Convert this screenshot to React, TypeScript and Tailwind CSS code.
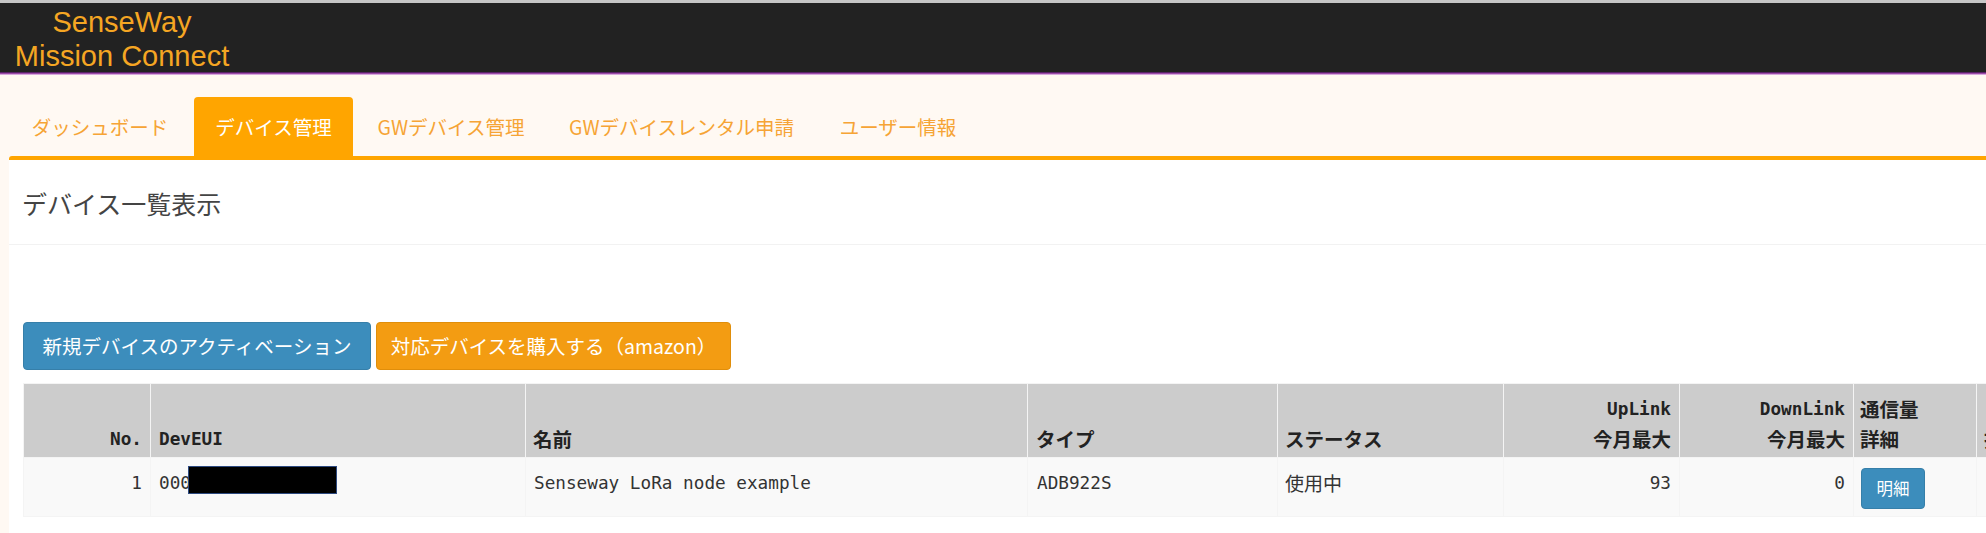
import React from "react";

const tabs = [
  { label: "ダッシュボード", w: "w-[178px]", active: false },
  { label: "デバイス管理", w: "w-[159px]", active: true },
  { label: "GWデバイス管理", w: "w-[186px]", active: false },
  { label: "GWデバイスレンタル申請", w: "w-[265px]", active: false },
  { label: "ユーザー情報", w: "w-[158px]", active: false },
];

const mono = "font-['DejaVu_Sans_Mono','Noto_Sans_CJK_JP',monospace]";
const jp = "font-['Noto_Sans_CJK_JP',sans-serif]";

export default function App() {
  return (
    <div className={`w-[1986px] h-[533px] overflow-hidden bg-[#fff9f3] ${jp}`}>
      <div className="h-[3px] bg-[#c6c6c6]" />
      <header className="h-[69px] bg-[#222222] pt-[2px]">
        <div className="w-[244px] text-center font-['Liberation_Sans',Arial,sans-serif] text-[29px] leading-[34px] text-[#f5a623]">
          <div>SenseWay</div>
          <div>Mission Connect</div>
        </div>
      </header>
      <div className="h-[1px] bg-[#5a2468]" />
      <div className="h-[1px] bg-[#9b4aa9]" />
      <div className="h-[1px] bg-[#d6a8dc]" />

      <nav className="h-[81px] flex items-end gap-[5px] pl-[11px]">
        {tabs.map((t) => (
          <div
            key={t.label}
            className={`${t.w} h-[59px] flex items-center justify-center text-[19.5px] rounded-t-[4px] ${
              t.active ? "bg-[#ffa500] text-white" : "text-[#f6a435]"
            }`}
          >
            {t.label}
          </div>
        ))}
      </nav>

      <main className="ml-[9px] bg-white border-t-[4px] border-[#ffa500] rounded-tl-[3px] h-[400px]">
        <div className="h-[85px] pt-[25px] pl-[13px] border-b border-[#f2f2f2]">
          <h3 className="text-[25px] leading-[36px] text-[#444444] font-normal">デバイス一覧表示</h3>
        </div>

        <div className="pl-[14px] pt-[77px] flex gap-[5px]">
          <button className="w-[348px] h-[48px] rounded-[4px] bg-[#3c8dbc] border border-[#367fa9] text-white text-[19.5px] flex items-center justify-center">
            新規デバイスのアクティベーション
          </button>
          <button className="w-[355px] h-[48px] rounded-[4px] bg-[#f39c12] border border-[#e08e0b] text-white text-[19.5px] flex items-center justify-center">
            対応デバイスを購入する（amazon）
          </button>
        </div>

        <div className="pl-[14px] pt-[13px]">
          <table className="table-fixed border-collapse w-[2100px] text-[#222]">
            <colgroup>
              <col className="w-[127px]" />
              <col className="w-[375px]" />
              <col className="w-[502px]" />
              <col className="w-[250px]" />
              <col className="w-[226px]" />
              <col className="w-[176px]" />
              <col className="w-[174px]" />
              <col className="w-[123px]" />
              <col className="w-[147px]" />
            </colgroup>
            <thead>
              <tr className="bg-[#cccccc] h-[74px]">
                <th className={`border border-[#f4f4f4] align-bottom text-right pr-[8px] pb-[3px] ${mono} text-[17.7px] leading-[30px] font-bold`}>No.</th>
                <th className={`border border-[#f4f4f4] align-bottom text-left pl-[8px] pb-[3px] ${mono} text-[17.7px] leading-[30px] font-bold`}>DevEUI</th>
                <th className={`border border-[#f4f4f4] align-bottom text-left pl-[7px] pb-[3px] ${jp} text-[19.5px] leading-[30px] font-bold`}>名前</th>
                <th className={`border border-[#f4f4f4] align-bottom text-left pl-[8px] pb-[3px] ${jp} text-[19.5px] leading-[30px] font-bold`}>タイプ</th>
                <th className={`border border-[#f4f4f4] align-bottom text-left pl-[7px] pb-[3px] ${jp} text-[19.5px] leading-[30px] font-bold`}>ステータス</th>
                <th className="border border-[#f4f4f4] align-bottom text-right pr-[8px] pb-[3px] leading-[30px] font-bold">
                  <div className={`${mono} text-[17.7px]`}>UpLink</div>
                  <div className={`${jp} text-[19.5px]`}>今月最大</div>
                </th>
                <th className="border border-[#f4f4f4] align-bottom text-right pr-[8px] pb-[3px] leading-[30px] font-bold">
                  <div className={`${mono} text-[17.7px]`}>DownLink</div>
                  <div className={`${jp} text-[19.5px]`}>今月最大</div>
                </th>
                <th className={`border border-[#f4f4f4] align-bottom text-left pl-[6px] pb-[3px] ${jp} text-[19.5px] leading-[30px] font-bold`}>
                  <div>通信量</div>
                  <div>詳細</div>
                </th>
                <th className={`border border-[#f4f4f4] align-bottom text-left pl-[7px] pb-[3px] ${jp} text-[19.5px] leading-[30px] font-bold`}>操作</th>
              </tr>
            </thead>
            <tbody>
              <tr className="bg-[#f9f9f9] h-[59px] text-[#333]">
                <td className={`border border-[#f4f4f4] align-top text-right pr-[8px] pt-[10px] ${mono} text-[17.7px] leading-[30px]`}>1</td>
                <td className={`border border-[#f4f4f4] align-top text-left pl-[8px] pt-[10px] ${mono} text-[17.7px] leading-[30px]`}>
                  <span className="relative inline-block">
                    000
                    <span className="absolute left-[29px] top-[-2px] w-[149px] h-[28px] bg-black border border-[#2d4a80]" />
                  </span>
                </td>
                <td className={`border border-[#f4f4f4] align-top text-left pl-[8px] pt-[10px] ${mono} text-[17.7px] leading-[30px]`}>Senseway LoRa node example</td>
                <td className={`border border-[#f4f4f4] align-top text-left pl-[9px] pt-[10px] ${mono} text-[17.7px] leading-[30px]`}>ADB922S</td>
                <td className={`border border-[#f4f4f4] align-top text-left pl-[7px] pt-[10px] ${jp} text-[19px] leading-[30px]`}>使用中</td>
                <td className={`border border-[#f4f4f4] align-top text-right pr-[8px] pt-[10px] ${mono} text-[17.7px] leading-[30px]`}>93</td>
                <td className={`border border-[#f4f4f4] align-top text-right pr-[8px] pt-[10px] ${mono} text-[17.7px] leading-[30px]`}>0</td>
                <td className="border border-[#f4f4f4] align-top text-left pl-[7px] pt-[10px]">
                  <button className={`w-[64px] h-[41px] rounded-[4px] bg-[#3c8dbc] border border-[#367fa9] text-white text-[16.5px] ${jp} flex items-center justify-center`}>
                    明細
                  </button>
                </td>
                <td className="border border-[#f4f4f4]" />
              </tr>
            </tbody>
          </table>
        </div>
      </main>
    </div>
  );
}
